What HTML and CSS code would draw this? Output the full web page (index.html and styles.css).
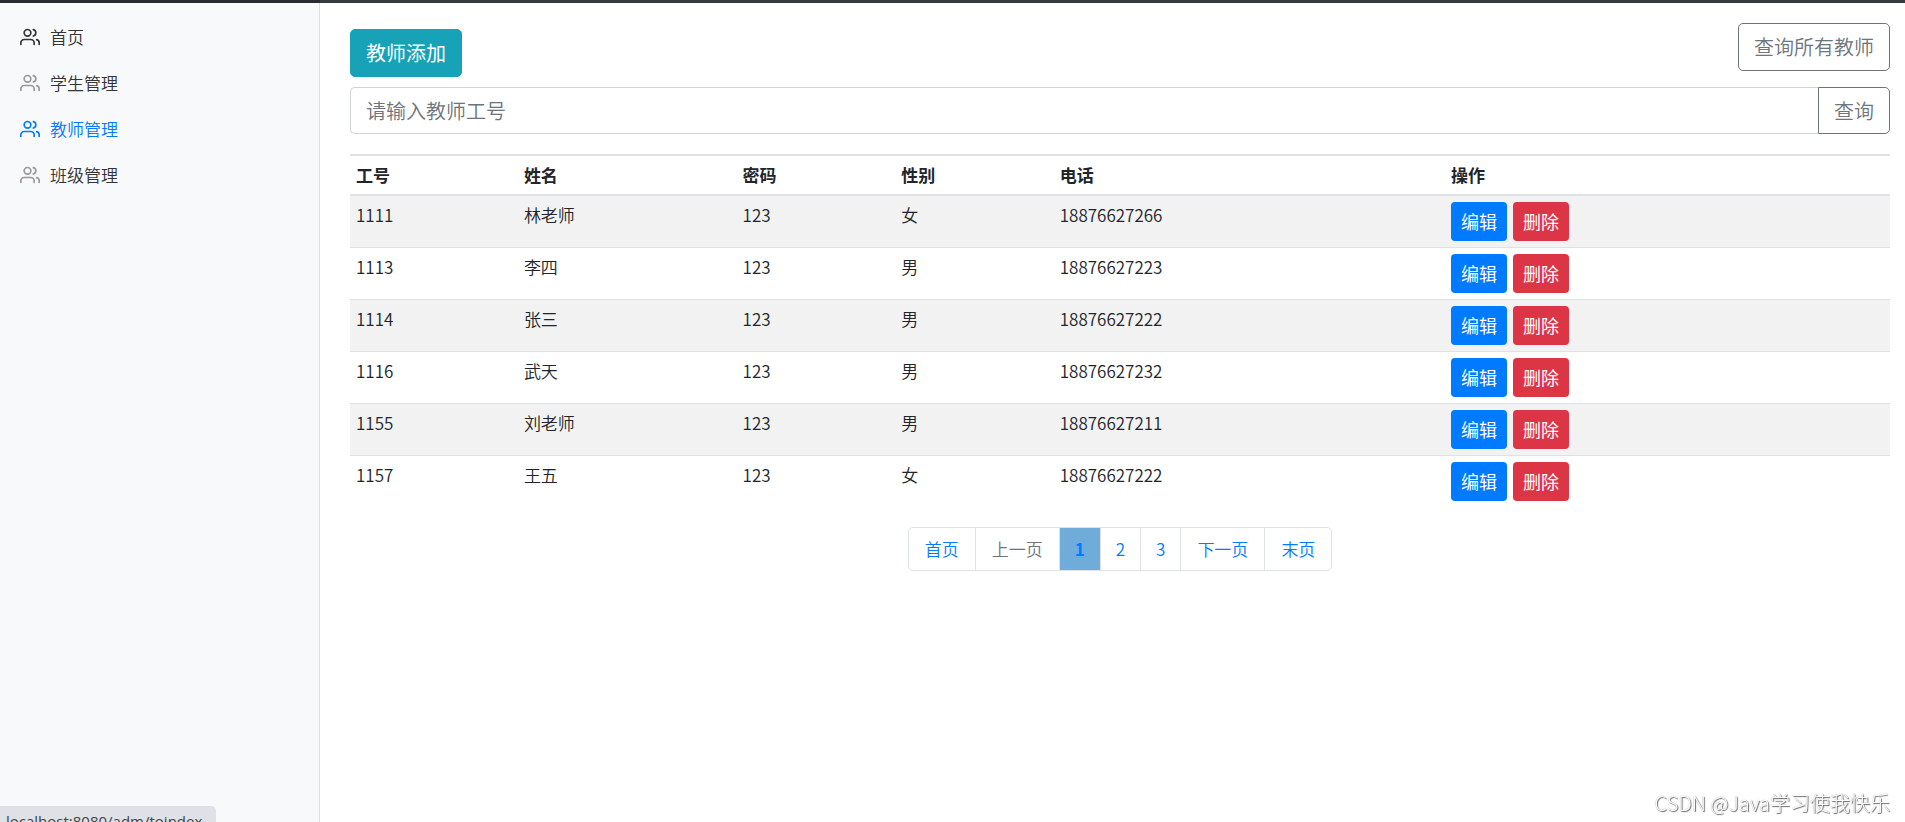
FILE: index.html
```html
<!DOCTYPE html>
<html lang="zh-CN">
<head>
<meta charset="utf-8">
<title>教师管理</title>
<link rel="stylesheet" href="styles.css">
</head>
<body>
<svg class="sprite" aria-hidden="true">
  <symbol id="users" viewBox="0 0 24 24">
    <path d="M17 21v-2a4 4 0 0 0-4-4H5a4 4 0 0 0-4 4v2"/>
    <circle cx="9" cy="7" r="4"/>
    <path d="M23 21v-2a4 4 0 0 0-3-3.87"/>
    <path d="M16 3.13a4 4 0 0 1 0 7.75"/>
  </symbol>
</svg>
<div class="layout">
  <nav class="sidebar">
    <a class="nav-link home" href="#"><svg class="icon"><use href="#users"/></svg>首页</a>
    <a class="nav-link" href="#"><svg class="icon"><use href="#users"/></svg>学生管理</a>
    <a class="nav-link active" href="#"><svg class="icon"><use href="#users"/></svg>教师管理</a>
    <a class="nav-link" href="#"><svg class="icon"><use href="#users"/></svg>班级管理</a>
  </nav>
  <main class="main">
    <div class="toolbar">
      <button class="btn btn-info" type="button">教师添加</button>
      <button class="btn btn-outline" type="button">查询所有教师</button>
    </div>
    <form class="search">
      <input class="search-input" type="text" placeholder="请输入教师工号" aria-label="教师工号">
      <button class="btn btn-outline btn-search" type="button">查询</button>
    </form>
    <table class="table">
      <colgroup>
        <col class="col-id"><col class="col-name"><col class="col-short"><col class="col-short"><col class="col-phone"><col>
      </colgroup>
      <thead>
        <tr><th>工号</th><th>姓名</th><th>密码</th><th>性别</th><th>电话</th><th>操作</th></tr>
      </thead>
      <tbody>
        <tr><td>1111</td><td>林老师</td><td>123</td><td>女</td><td>18876627266</td><td><div class="actions"><button class="btn-sm edit" type="button">编辑</button><button class="btn-sm delete" type="button">删除</button></div></td></tr>
        <tr><td>1113</td><td>李四</td><td>123</td><td>男</td><td>18876627223</td><td><div class="actions"><button class="btn-sm edit" type="button">编辑</button><button class="btn-sm delete" type="button">删除</button></div></td></tr>
        <tr><td>1114</td><td>张三</td><td>123</td><td>男</td><td>18876627222</td><td><div class="actions"><button class="btn-sm edit" type="button">编辑</button><button class="btn-sm delete" type="button">删除</button></div></td></tr>
        <tr><td>1116</td><td>武天</td><td>123</td><td>男</td><td>18876627232</td><td><div class="actions"><button class="btn-sm edit" type="button">编辑</button><button class="btn-sm delete" type="button">删除</button></div></td></tr>
        <tr><td>1155</td><td>刘老师</td><td>123</td><td>男</td><td>18876627211</td><td><div class="actions"><button class="btn-sm edit" type="button">编辑</button><button class="btn-sm delete" type="button">删除</button></div></td></tr>
        <tr><td>1157</td><td>王五</td><td>123</td><td>女</td><td>18876627222</td><td><div class="actions"><button class="btn-sm edit" type="button">编辑</button><button class="btn-sm delete" type="button">删除</button></div></td></tr>
      </tbody>
    </table>
    <nav class="pagination" aria-label="分页">
      <a class="page" href="#">首页</a>
      <a class="page disabled" href="#">上一页</a>
      <a class="page number current" href="#" aria-current="page">1</a>
      <a class="page number" href="#">2</a>
      <a class="page number" href="#">3</a>
      <a class="page" href="#">下一页</a>
      <a class="page" href="#">末页</a>
    </nav>
  </main>
</div>
<div class="status">localhost:8080/adm/toindex</div>
<div class="watermark">CSDN @Java学习使我快乐</div>
</body>
</html>
```
FILE: styles.css
```css
* {
  box-sizing: border-box;
}

body {
  margin: 0;
  color: #212529;
  background: #fff;
  font-family: "Noto Sans CJK SC", sans-serif;
  font-size: 17px;
  font-weight: 350;
  line-height: 26px;
}

a {
  text-decoration: none;
}

button,
input {
  font: inherit;
}

button {
  cursor: pointer;
}

.sprite {
  display: none;
}

.layout {
  display: flex;
  min-height: 100vh;
}

.sidebar {
  flex: 0 0 16.8%;
  padding-top: 11px;
  background: #f8f9fb;
  border-top: 3px solid #292b30;
  box-shadow: inset -1px 0 0 #dcdee1;
}

.nav-link {
  display: flex;
  align-items: center;
  gap: 10px;
  padding: 10px 20px;
  color: #333;
}

.icon {
  width: 20px;
  height: 20px;
  fill: none;
  stroke: #999;
  stroke-width: 2;
  stroke-linecap: round;
  stroke-linejoin: round;
}

.home .icon {
  stroke: #333;
}

.active {
  color: #007bff;
}

.active .icon {
  stroke: #007bff;
}

.main {
  flex: 1;
  min-width: 0;
  padding: 20px 15px 20px 30px;
  border-top: 3px solid #343a40;
}

.toolbar {
  display: flex;
  justify-content: space-between;
  align-items: flex-start;
  margin-bottom: 10px;
}

.btn {
  padding: 8px 15px;
  border: 1px solid;
  border-radius: 5px;
  font-size: 20px;
  line-height: 30px;
}

.btn-info {
  margin-top: 6px;
  color: #fff;
  background: #17a2b8;
  border-color: #17a2b8;
  font-weight: 400;
}

.btn-outline {
  color: #6c757d;
  background: #fff;
  border-color: #6c757d;
}

.search {
  display: flex;
  height: 47px;
  margin-bottom: 20px;
}

.search-input {
  flex: 1;
  min-width: 0;
  padding: 0 15px;
  color: #495057;
  background: #fff;
  border: 1px solid #ced4da;
  border-right: 0;
  border-radius: 5px 0 0 5px;
  font-size: 20px;
}

.search-input::placeholder {
  color: #6c757d;
  opacity: 1;
}

.btn-search {
  padding: 7px 15px;
  border-radius: 0 5px 5px 0;
}

.table {
  width: 100%;
  table-layout: fixed;
  border-spacing: 0;
  margin-bottom: 20px;
}

.col-id {
  width: 10.9%;
}

.col-name {
  width: 14.2%;
}

.col-short {
  width: 10.3%;
}

.col-phone {
  width: 25.4%;
}

.table th,
.table td {
  padding: 6px;
  text-align: left;
  vertical-align: top;
}

.table th {
  border-top: 2px solid #dee2e6;
  border-bottom: 2px solid #dee2e6;
  font-weight: 700;
}

.table tbody tr:nth-child(odd) {
  background: #f2f2f2;
}

.table tbody tr + tr td {
  border-top: 1px solid #dee2e6;
}

.actions {
  display: flex;
  gap: 6px;
}

.btn-sm {
  padding: 6px 10px;
  color: #fff;
  border: 0;
  border-radius: 4px;
  font-size: 18px;
  font-weight: 400;
  line-height: 27px;
}

.edit {
  background: #007bff;
}

.delete {
  background: #dc3545;
}

.pagination {
  display: flex;
  width: fit-content;
  margin: 0 auto;
  border: 1px solid #dee2e6;
  border-radius: 5px;
}

.page {
  padding: 8px 16px;
  color: #007bff;
}

.page + .page {
  border-left: 1px solid #dee2e6;
}

.number {
  padding: 8px 15px;
}

.disabled {
  color: #6c757d;
}

.current {
  background: #6facd9;
  font-weight: 700;
}

.status {
  position: fixed;
  left: 0;
  bottom: 0;
  height: 16px;
  padding: 0 14px 0 6px;
  overflow: hidden;
  color: #444;
  background: #dee1e6;
  border-top-right-radius: 5px;
  font-family: "Open Sans", sans-serif;
  font-size: 15px;
  font-weight: 400;
  line-height: 30px;
}

.watermark {
  position: fixed;
  right: 15px;
  bottom: 6px;
  color: #fff;
  font-size: 20px;
  font-weight: 300;
  text-shadow: 1px 1px 1px #666, 0 0 1px #999;
}
```
